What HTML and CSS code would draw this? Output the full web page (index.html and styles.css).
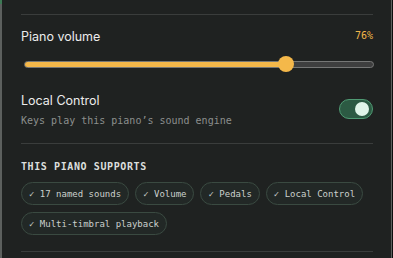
FILE: index.html
```html
<!DOCTYPE html>
<html>
<head>
<meta charset="utf-8">
<link rel="stylesheet" href="styles.css">
</head>
<body>
<div class="panel">
  <div class="section first">
    <div class="vol-head">
      <span class="label">Piano volume</span>
      <span class="pct">76%</span>
    </div>
    <div class="slider">
      <div class="track">
        <div class="fill" style="width: 76%"></div>
      </div>
      <div class="thumb" style="left: calc(76% * 0.954)"></div>
    </div>
    <div class="control-row">
      <div class="control-text">
        <div class="label">Local Control</div>
        <div class="desc">Keys play this piano’s sound engine</div>
      </div>
      <div class="toggle"><div class="knob"></div></div>
    </div>
  </div>
  <div class="section supports">
    <div class="heading">THIS PIANO SUPPORTS</div>
    <div class="chips">
      <span class="chip">✓ 17 named sounds</span>
      <span class="chip">✓ Volume</span>
      <span class="chip">✓ Pedals</span>
      <span class="chip">✓ Local Control</span>
      <span class="chip">✓ Multi-timbral playback</span>
    </div>
  </div>
  <div class="section last"></div>
</div>
</body>
</html>
```

FILE: styles.css
```css
html, body {
  margin: 0;
  padding: 0;
  background: #0d0e0e;
  height: 258px;
  overflow: hidden;
}
.panel {
  width: 352px;
  height: 244px;
  background: #1f2221;
  border-left: 2px solid #5c605e;
  border-right: 1px solid #5c605e;
  padding: 14px 18px 0 19px;
  position: relative;
  font-family: "Inter", "Liberation Sans", sans-serif;
}
.panel::before {
  content: "";
  position: absolute;
  left: -2px;
  top: 0;
  width: 2px;
  height: 4px;
  background: #3d7a55;
}
.section {
  border-top: 1px solid #3a3d3c;
}
.section.first {
  padding-top: 14px;
  padding-bottom: 15px;
}
.vol-head {
  display: flex;
  justify-content: space-between;
  align-items: center;
  height: 16px;
}
.label {
  color: #ececec;
  font-size: 12.5px;
  line-height: 16px;
}
.pct {
  color: #f0b64a;
  font-family: "DejaVu Sans Mono", monospace;
  font-size: 10px;
  line-height: 14px;
  margin-top: -2px;
}
.slider {
  position: relative;
  margin: 11px 0 0 3px;
  height: 16px;
  width: 350px;
  display: flex;
  align-items: center;
}
.track {
  width: 100%;
  height: 7px;
  border-radius: 4px;
  background: #3e3f3f;
  border: 1px solid #757776;
  box-sizing: border-box;
  overflow: hidden;
}
.fill {
  height: 100%;
  background: #f4b84a;
}
.thumb {
  position: absolute;
  top: 0;
  width: 16px;
  height: 16px;
  border-radius: 50%;
  background: #f4b84a;
}
.control-row {
  display: flex;
  justify-content: space-between;
  align-items: center;
  margin-top: 20px;
}
.control-text .label {
  line-height: 18px;
}
.desc {
  color: #8c8f8d;
  font-family: "DejaVu Sans Mono", monospace;
  font-size: 10px;
  line-height: 14px;
  margin-top: 4px;
}
.toggle {
  width: 34px;
  height: 20px;
  border-radius: 10px;
  background: #2c5a43;
  border: 1px solid #4f9a73;
  box-sizing: border-box;
  display: flex;
  align-items: center;
  justify-content: flex-end;
  padding-right: 3px;
  margin-top: -3px;
}
.knob {
  width: 14px;
  height: 14px;
  border-radius: 50%;
  background: #e0f5e9;
}
.supports {
  padding-top: 16px;
  padding-bottom: 16px;
}
.heading {
  color: #dcdfdd;
  font-family: "DejaVu Sans Mono", monospace;
  font-size: 10px;
  font-weight: bold;
  letter-spacing: 0.6px;
  line-height: 14px;
}
.chips {
  display: flex;
  flex-wrap: wrap;
  gap: 7px 6px;
  margin-top: 8px;
}
.chip {
  display: inline-flex;
  align-items: center;
  height: 23px;
  box-sizing: border-box;
  padding: 0 7px;
  border: 1px solid #3a4a41;
  border-radius: 12px;
  background: #222826;
  color: #cbd0cd;
  font-family: "DejaVu Sans Mono", monospace;
  font-size: 9px;
}
```
